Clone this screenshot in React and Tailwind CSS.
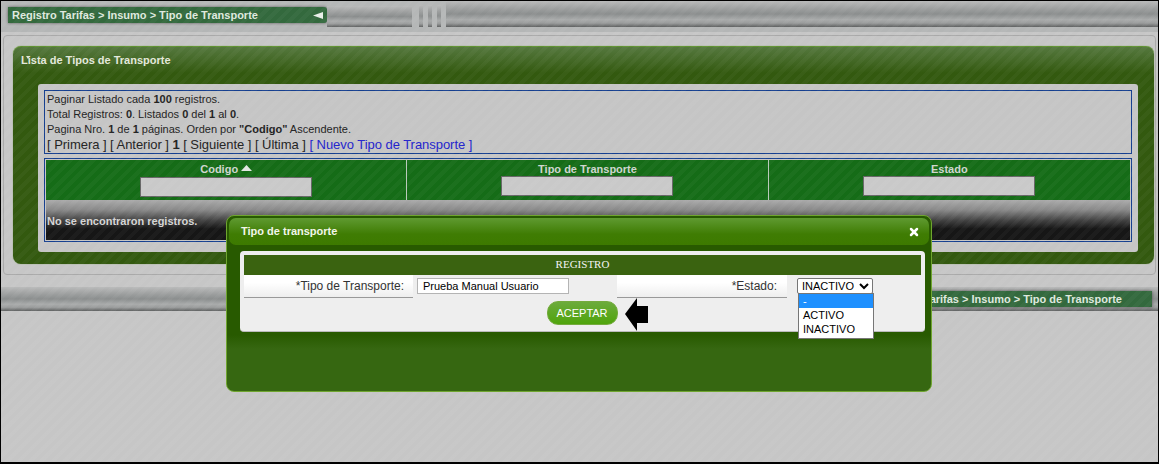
import { X } from 'lucide-react';

const crumb = 'Registro Tarifas > Insumo > Tipo de Transporte';

const columns = [
  { label: 'Codigo', sorted: true },
  { label: 'Tipo de Transporte' },
  { label: 'Estado' },
];

function Metal({ className = '' }) {
  return (
    <div
      className={`bg-[linear-gradient(180deg,#b9baba_0%,#9c9e9e_30%,#8b8e8e_50%,#a9abab_72%,#9a9c9c_85%,#5f6161_100%)] ${className}`}
    />
  );
}

function Modal() {
  return (
    <div className="absolute left-[225px] top-[214px] z-20 flex h-[177px] w-[706px] flex-col rounded-[8px] border border-[#6fa52f] bg-[linear-gradient(180deg,#285a00_0%,#285a00_68%,#366711_76%,#366711_100%)] p-[2px]">
      {/* Title */}
      <div className="flex h-[27px] shrink-0 items-center justify-between rounded-[7px] bg-[linear-gradient(180deg,#5f9a31_0%,#3f7c03_60%,#3d7a00_100%)] pl-[12px] pr-[9px]">
        <span className="text-[11px] font-bold text-[#f2f6ea]">Tipo de transporte</span>
        <X className="h-[12px] w-[12px] text-white" strokeWidth={5} />
      </div>

      {/* Form */}
      <div className="ml-[11px] mr-[4px] mt-[6px] h-[81px] rounded-[4px] border-b border-[#bbbbbb] bg-[#eeeeee] px-[4px] pt-[4px]">
        <div className="flex h-[20px] items-center justify-center bg-[#3a6310] pb-[1px] font-['Liberation_Serif',serif] text-[11px] text-[#f3f3f3]">
          REGISTRO
        </div>
        <div className="flex h-[23px] text-[#333333]">
          <div className="flex w-[169px] items-center justify-end border-b border-[#999999] bg-[linear-gradient(180deg,#ffffff_0%,#ffffff_35%,#eeeeee_100%)] pr-[9px] text-[12px]">
            <span>*Tipo de Transporte:</span>
          </div>
          <div className="w-[204px] pl-[4px] pt-[3px]">
            <input
              readOnly
              defaultValue="Prueba Manual Usuario"
              className="block h-[16px] w-[152px] border border-[#b4b4b4] bg-white px-[5px] text-[11px] text-black outline-none"
            />
          </div>
          <div className="flex w-[170px] items-center justify-end border-b border-[#999999] bg-[linear-gradient(180deg,#ffffff_0%,#ffffff_35%,#eeeeee_100%)] pr-[10px] text-[12px]">
            <span>*Estado:</span>
          </div>
          <div className="pl-[10px] pt-[3px]">
            <select
              defaultValue="INACTIVO"
              className="block h-[16px] w-[76px] rounded-[2px] border border-[#767676] bg-white text-[11px] text-black outline-none"
            >
              <option value="-">-</option>
              <option value="ACTIVO">ACTIVO</option>
              <option value="INACTIVO">INACTIVO</option>
            </select>
          </div>
        </div>
        <div className="flex justify-center pt-[3px]">
          <button className="ml-[-1px] h-[24px] w-[71px] rounded-[11px] border border-[#74ab3d] bg-[linear-gradient(180deg,#6cab3c_0%,#4fa40c_100%)] text-[11px] text-white">
            ACEPTAR
          </button>
        </div>
      </div>

      {/* Arrow pointing at the button */}
      <svg className="absolute left-[398px] top-[82px]" width="24" height="34" viewBox="0 0 24 34">
        <polygon points="0,16 12,0 12,8 23,8 23,25 12,25 12,33" fill="#000" />
      </svg>

      {/* Open select list */}
      <div className="absolute left-[571px] top-[77px] flex h-[46px] w-[76px] flex-col border border-[#767676] bg-white text-[11px] leading-[14px] text-black">
        <div className="bg-[#1e90ff] pl-[4px] text-white">-</div>
        <div className="pl-[4px]">ACTIVO</div>
        <div className="pl-[4px]">INACTIVO</div>
      </div>
    </div>
  );
}

export default function App() {
  return (
    <div className="relative h-[464px] w-[1159px] overflow-hidden border-b-2 border-l border-r border-t border-black bg-[#c6c6c6] font-['Liberation_Sans',Arial,sans-serif]">
      {/* Top bar */}
      <div className="flex h-[26px] bg-[#b5b7b7]">
        <div className="ml-[7px] mt-[6px] flex h-[16px] w-[319px] items-center justify-between rounded-r-[3px] bg-[#33693d] pl-[4px] pr-[4px] shadow-[0_0_3px_#555]">
          <span className="text-[11px] font-bold text-[#dfe8df]">{crumb}</span>
          <svg width="10" height="7" viewBox="0 0 10 7">
            <polygon points="0,3.5 10,0 10,7" fill="#e8efe8" />
          </svg>
        </div>
        <Metal className="mt-[5px] h-[21px] w-[85px]" />
        <div className="flex h-full w-[34px] justify-evenly pl-[2px]">
          <Metal className="mt-[4px] h-[22px] w-[4px]" />
          <Metal className="mt-[4px] h-[22px] w-[4px]" />
          <Metal className="mt-[4px] h-[22px] w-[4px]" />
        </div>
        <Metal className="h-full flex-1" />
      </div>
      <div className="h-[5px] bg-[#b4b6b6]" />

      {/* Panel */}
      <div className="ml-[2px] mr-[2px] mt-[3px] h-[240px] rounded-[4px] border border-[#a9a9a9] pl-[9px] pr-[1px] pt-[10px]">
        <div className="h-[218px] rounded-[8px] border-t border-[#5f9231] bg-[linear-gradient(180deg,#55783e_0%,#33590f_12%,#33590f_100%)] pl-[25px] pr-[16px] pt-[7px] shadow-[0_0_1px_#5f9231]">
          <h2 className="relative ml-[-17px] h-[30px] text-[11px] font-bold leading-[13px] text-[#e3e8dc]">
            Lista de Tipos de Transporte
            <svg className="absolute left-[5px] top-[2px]" width="4" height="3" viewBox="0 0 4 3">
              <polygon points="0,0 4,0 2,3" fill="#dfe5d8" />
            </svg>
          </h2>
          <div className="h-[168px] rounded-[3px] bg-[#c5c5c5] px-[6px] pt-[6px]">
            {/* Pagination info */}
            <div className="h-[64px] border border-[#153f8f] px-[2px] pt-[1px] text-[11px] leading-[15px] text-[#222222]">
              <p>
                Paginar Listado cada <b>100</b> registros.
              </p>
              <p>
                Total Registros: <b>0</b>. Listados <b>0</b> del <b>1</b> al <b>0</b>.
              </p>
              <p>
                Pagina Nro. <b>1</b> de <b>1</b> páginas. Orden por <b>"Codigo"</b> Ascendente.
              </p>
              <p className="text-[13px] leading-[16px] tracking-[-0.04px]">
                [ Primera ] [ Anterior ] <b>1</b> [ Siguiente ] [ Última ]{' '}
                <span className="text-[#2222cc]">[ Nuevo Tipo de Transporte ]</span>
              </p>
            </div>

            {/* Table */}
            <div className="mt-[4px] flex h-[84px] flex-col border border-[#153f8f] p-px">
              <div className="grid h-[40px] grid-cols-3 bg-[#156c17]">
                {columns.map((col, i) => (
                  <div
                    key={col.label}
                    className={`flex flex-col items-center pt-[3px] ${i < 2 ? 'border-r border-[#b9c9b9]' : ''}`}
                  >
                    <span className="flex h-[13px] items-center gap-[3px] text-[11px] font-bold text-[#cfd6cf]">
                      {col.label}
                      {col.sorted && (
                        <svg className="mb-[3px]" width="11" height="6" viewBox="0 0 11 6">
                          <polygon points="5.5,0 11,6 0,6" fill="#e2e8e2" />
                        </svg>
                      )}
                    </span>
                    <div
                      className={`h-[20px] w-[172px] border border-[#666666] bg-[#c9c9c9] ${col.sorted ? 'mt-[1px]' : ''}`}
                    />
                  </div>
                ))}
              </div>
              <div className="flex flex-1 items-center bg-[linear-gradient(180deg,#aaaaaa_0%,#888888_25%,#444444_50%,#161616_72%,#161616_100%)] pl-[1px] pt-[2px]">
                <span className="text-[11px] font-bold text-[#d5d5d5]">No se encontraron registros.</span>
              </div>
            </div>
          </div>
        </div>
      </div>

      {/* Bottom bar */}
      <div className="mt-[12px] flex h-[24px] justify-end bg-[linear-gradient(180deg,#b9baba_0%,#9c9e9e_30%,#8b8e8e_50%,#a9abab_72%,#9a9c9c_85%,#5f6161_100%)] pr-[6px] pt-[4px]">
        <div className="flex h-[16px] w-[322px] items-center justify-end bg-[#33693d] pr-[30px] shadow-[0_0_3px_#555]">
          <span className="text-[11px] font-bold text-[#dfe8df]">{crumb}</span>
        </div>
      </div>

      {/* Diagonal stripes laid over the page background */}
      <div className="pointer-events-none absolute inset-0 z-10 bg-[repeating-linear-gradient(135deg,rgba(255,255,255,0.03)_0,rgba(255,255,255,0.03)_4px,transparent_4px,transparent_8px)]" />

      <Modal />
    </div>
  );
}
